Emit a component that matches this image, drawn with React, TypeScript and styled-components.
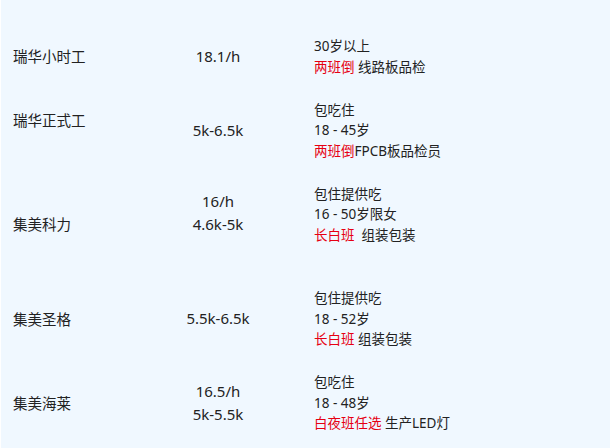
import styled, { createGlobalStyle } from "styled-components";

const GlobalStyle = createGlobalStyle`
  html, body {
    margin: 0;
    background: #ffffff;
  }
  body {
    font-family: "Noto Sans", "Noto Sans CJK SC", sans-serif;
    color: #222222;
  }
`;

const Page = styled.div`
  box-sizing: border-box;
  height: 448px;
  margin: 0 2px 0 1px;
  padding-top: 25px;
  background: #f0f8ff;
  overflow: hidden;
`;

const Row = styled.div`
  display: grid;
  grid-template-columns: 129px 176px 1fr;
  align-items: center;
  padding: 11.25px 0;
`;

const NameCell = styled.div`
  padding-left: 12px;
  font-size: 14.5px;
  line-height: 21px;
`;

const PayCell = styled.div`
  text-align: center;
  font-size: 15px;
  line-height: 23.5px;
`;

const InfoCell = styled.div`
  padding-left: 8px;
  font-size: 13.5px;
  line-height: 20.5px;
`;

const Line = styled.div`
  white-space: pre;
`;

const Tag = styled.span`
  color: #e60012;
`;

type InfoLine = string | { tag: string; rest: string };

type Job = {
  name: string[];
  pay: string[];
  info: InfoLine[];
};

const jobs: Job[] = [
  {
    name: ["瑞华小时工"],
    pay: ["18.1/h"],
    info: ["30岁以上", { tag: "两班倒", rest: " 线路板品检" }],
  },
  {
    name: ["瑞华正式工", ""],
    pay: ["5k-6.5k"],
    info: ["包吃住", "18 - 45岁", { tag: "两班倒", rest: "FPCB板品检员" }],
  },
  {
    name: ["集美科力"],
    pay: ["16/h", "4.6k-5k", ""],
    info: ["包住提供吃", "16 - 50岁限女", { tag: "长白班", rest: "  组装包装" }, ""],
  },
  {
    name: ["集美圣格"],
    pay: ["5.5k-6.5k"],
    info: ["包住提供吃", "18 - 52岁", { tag: "长白班", rest: " 组装包装" }],
  },
  {
    name: ["集美海莱"],
    pay: ["16.5/h", "5k-5.5k"],
    info: ["包吃住", "18 - 48岁", { tag: "白夜班任选", rest: " 生产LED灯" }],
  },
];

const renderLines = (lines: string[]) =>
  lines.map((l, i) => <Line key={i}>{l || "\u00a0"}</Line>);

export default function App() {
  return (
    <>
      <GlobalStyle />
      <Page>
        {jobs.map((job) => (
          <Row key={job.name[0]}>
            <NameCell>{renderLines(job.name)}</NameCell>
            <PayCell>{renderLines(job.pay)}</PayCell>
            <InfoCell>
              {job.info.map((line, i) =>
                typeof line === "string" ? (
                  <Line key={i}>{line || "\u00a0"}</Line>
                ) : (
                  <Line key={i}>
                    <Tag>{line.tag}</Tag>
                    {line.rest}
                  </Line>
                )
              )}
            </InfoCell>
          </Row>
        ))}
      </Page>
    </>
  );
}
